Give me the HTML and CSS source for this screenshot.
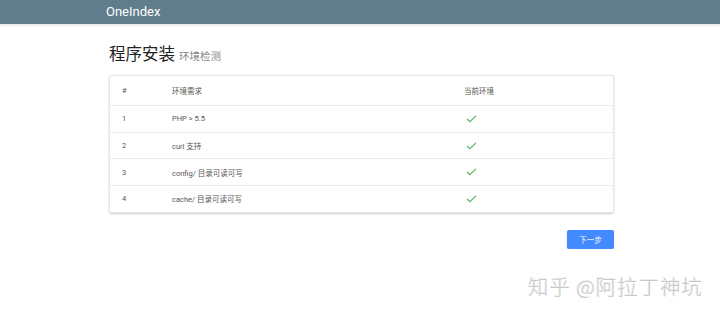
FILE: index.html
```html
<!DOCTYPE html>
<html>
<head>
  <title>OneIndex</title>
  <link rel="stylesheet" href="styles.css">
</head>
<body>
  <header class="topbar">
    <div class="brand">OneIndex</div>
  </header>
  <div class="container">
    <h1 class="title">程序安装 <small>环境检测</small></h1>
    <div class="card">
      <div class="row head">
        <div>#</div>
        <div>环境需求</div>
        <div>当前环境</div>
      </div>
      <div class="row">
        <div>1</div>
        <div>PHP &gt; 5.5</div>
        <div><svg class="check" viewBox="0 0 12 9"><polyline points="1,4.5 4.2,7.5 11,1"/></svg></div>
      </div>
      <div class="row">
        <div>2</div>
        <div>curl 支持</div>
        <div><svg class="check" viewBox="0 0 12 9"><polyline points="1,4.5 4.2,7.5 11,1"/></svg></div>
      </div>
      <div class="row">
        <div>3</div>
        <div>config/ 目录可读可写</div>
        <div><svg class="check" viewBox="0 0 12 9"><polyline points="1,4.5 4.2,7.5 11,1"/></svg></div>
      </div>
      <div class="row">
        <div>4</div>
        <div>cache/ 目录可读可写</div>
        <div><svg class="check" viewBox="0 0 12 9"><polyline points="1,4.5 4.2,7.5 11,1"/></svg></div>
      </div>
    </div>
    <div class="actions">
      <button class="next">下一步</button>
    </div>
  </div>
  <div class="watermark">知乎 @阿拉丁神坑</div>
</body>
</html>
```

FILE: styles.css
```css
body {
  margin: 0;
  background-color: #fff;
  font-family: Roboto, "Noto Sans CJK SC", sans-serif;
  color: #333;
}

.topbar {
  height: 24px;
  background-color: #607d8b;
  box-shadow: 0 1px 3px rgba(0, 0, 0, 0.15);
}

.brand {
  padding-left: 106px;
  line-height: 23px;
  font-size: 13px;
  color: #fff;
}

.container {
  width: 505px;
  margin-left: calc(50% - 251px);
}

.title {
  margin: 21px 0 8px;
  font-size: 16.5px;
  font-weight: normal;
  line-height: 20px;
  color: #222;
}

.title small {
  font-size: 10.5px;
  color: #888;
}

.card {
  box-sizing: border-box;
  border: 1px solid #e6e6e6;
  border-radius: 2px;
  box-shadow: 0 1px 2px rgba(0, 0, 0, 0.2);
  font-size: 7.5px;
  color: #555;
}

.row {
  display: grid;
  grid-template-columns: 50px 292px 1fr;
  align-items: center;
  height: 25.7px;
  padding-left: 12px;
  border-top: 1px solid #ececec;
}

.row.head {
  height: 29px;
  border-top: none;
}

.check {
  display: block;
  width: 11px;
  height: 8px;
  margin-left: 2px;
  fill: none;
  stroke: #5bb55f;
  stroke-width: 1.3;
}

.actions {
  display: flex;
  justify-content: flex-end;
  margin-top: 17px;
}

.next {
  width: 47px;
  height: 19px;
  padding: 0;
  border: none;
  border-radius: 2px;
  background-color: #448aff;
  color: #fff;
  font-family: Roboto, "Noto Sans CJK SC", sans-serif;
  font-size: 7.5px;
  box-shadow: 0 1px 2px rgba(0, 0, 0, 0.15);
}

.watermark {
  position: absolute;
  left: 528px;
  top: 271px;
  font-family: "Noto Sans CJK SC", sans-serif;
  font-size: 20.5px;
  font-weight: 300;
  color: #c8c8c8;
  text-shadow: 1px 1px 0 #fff, -1px -1px 0 #eee;
  letter-spacing: 0.9px;
}
```
